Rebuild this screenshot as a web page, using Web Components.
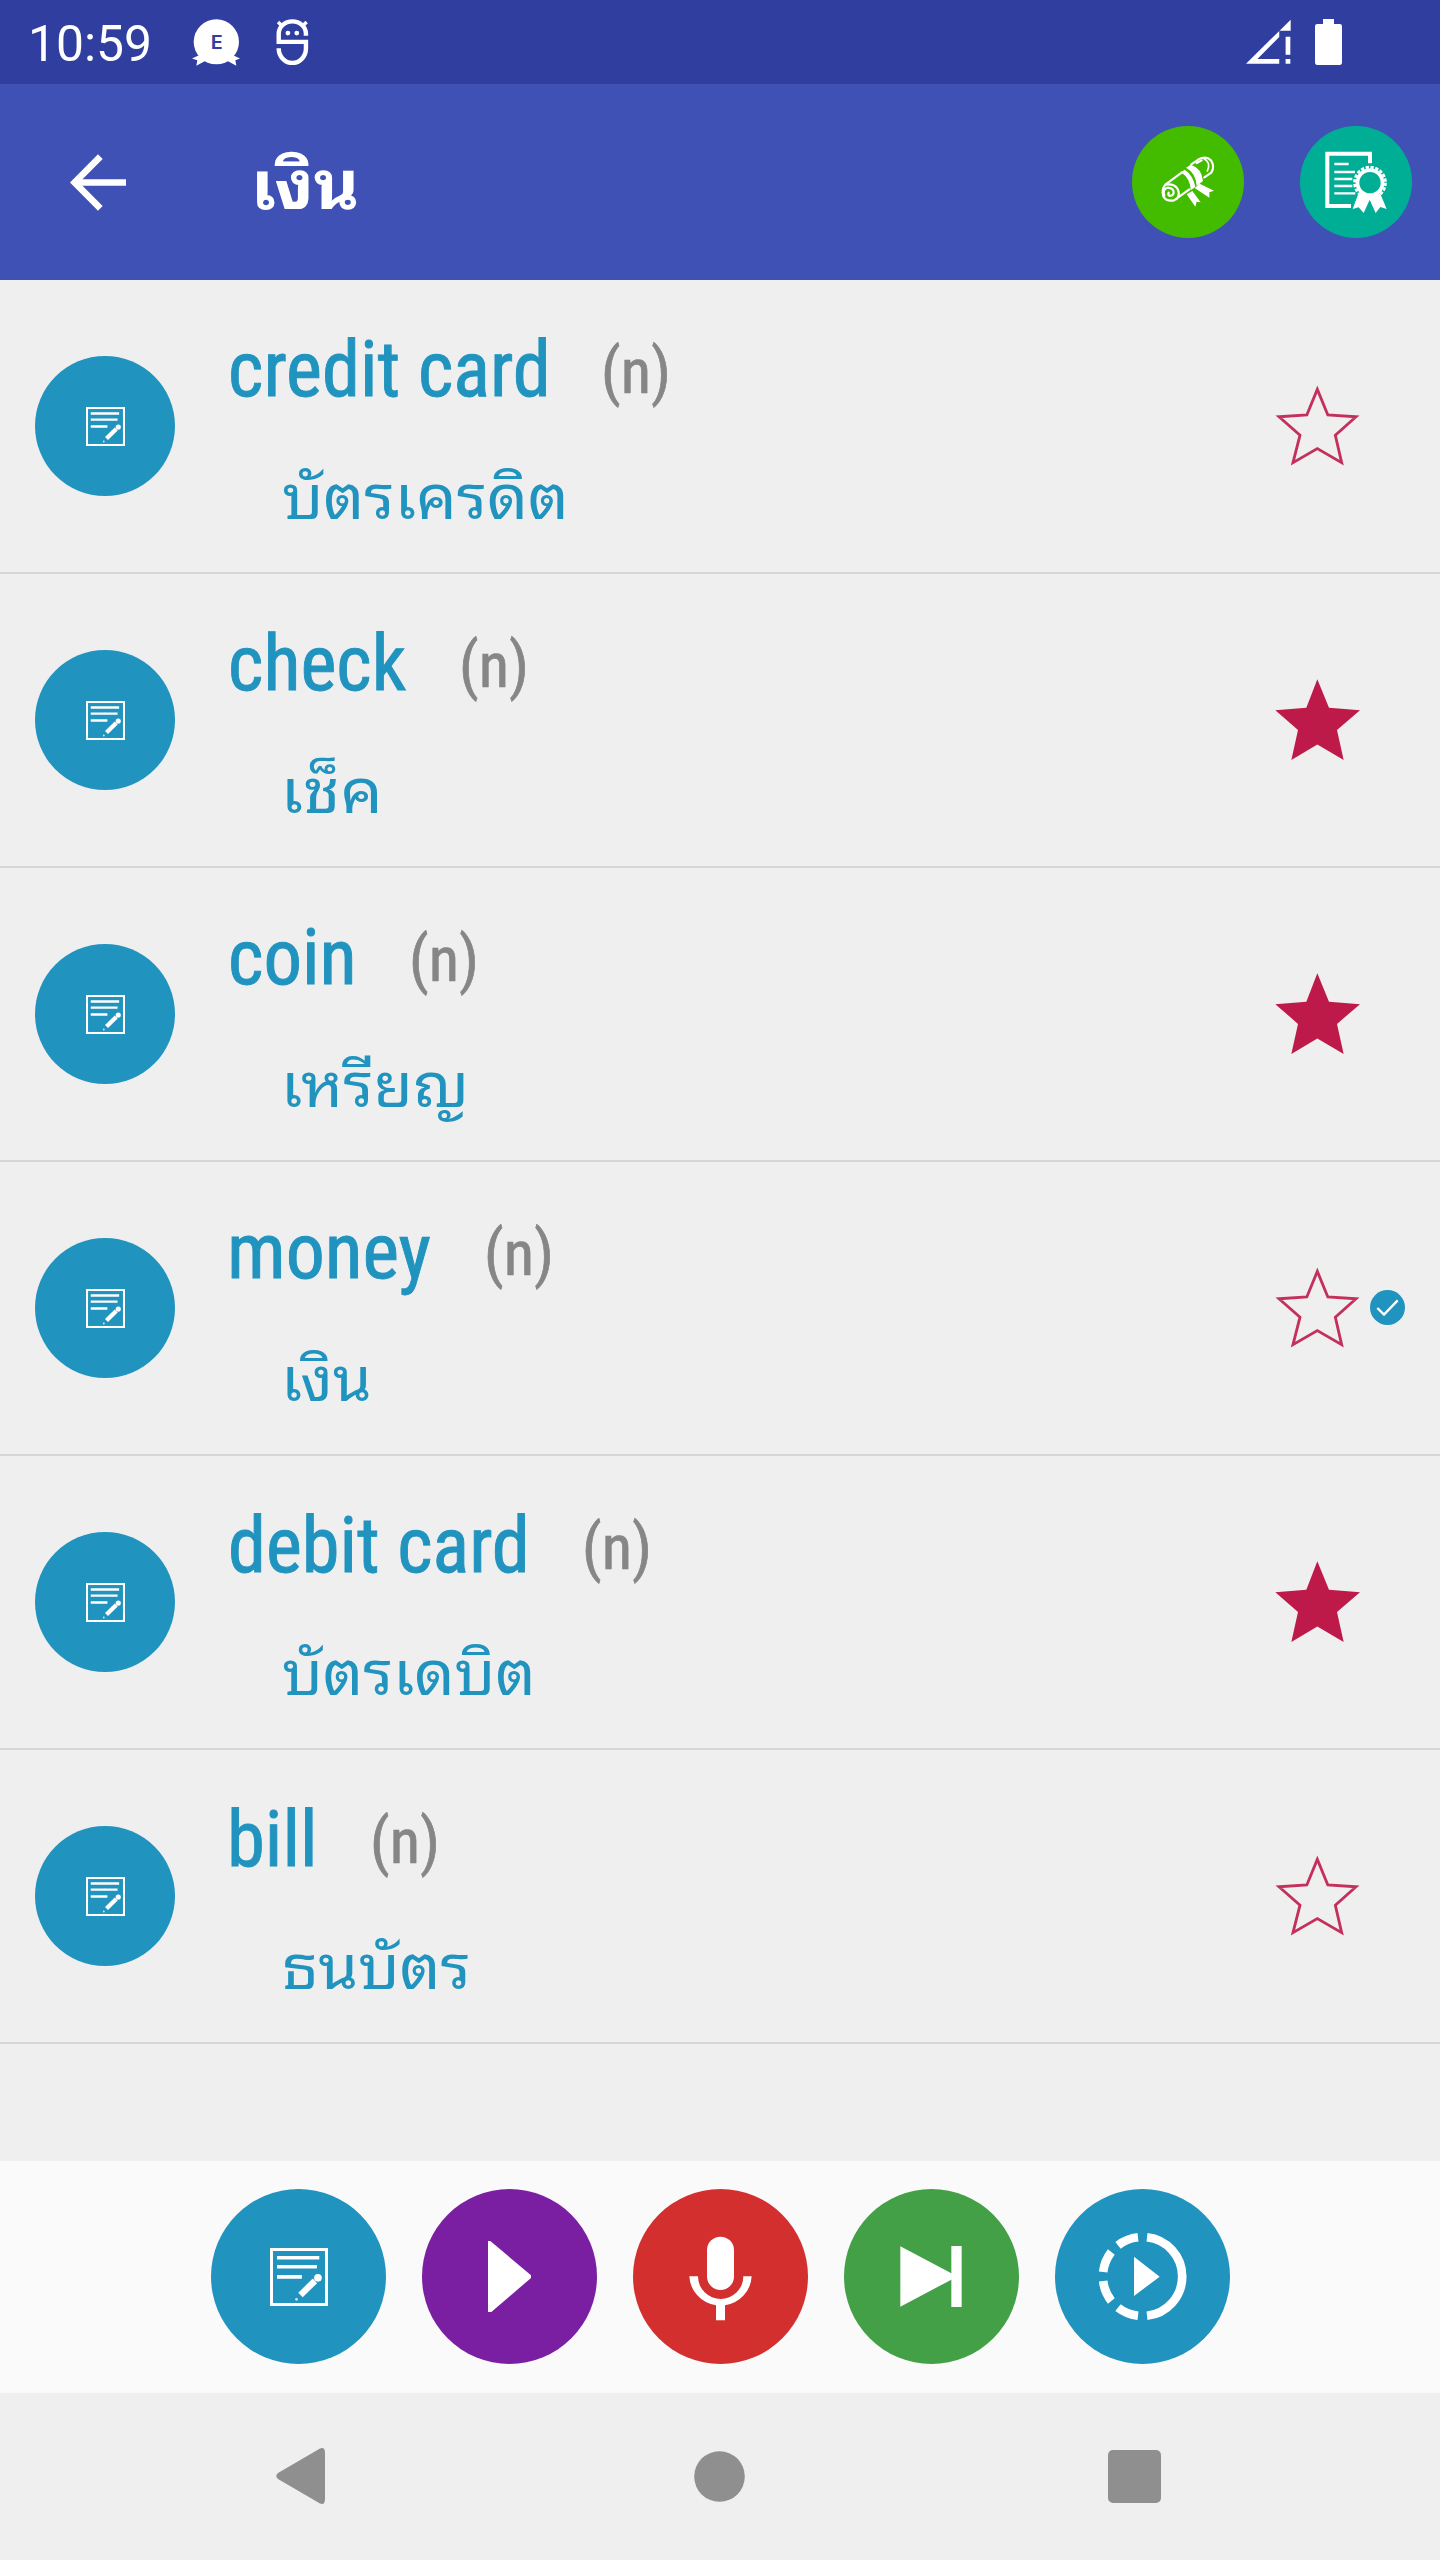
<!DOCTYPE html>
<html lang="th">
<head>
<meta charset="utf-8">
<title>เงิน</title>
<style>
html,body{margin:0;padding:0;background:#efefef}
body{width:1440px;height:2560px;overflow:hidden;font-family:Roboto,"Noto Sans Thai Looped","Noto Sans",sans-serif}
</style>
</head>
<body>
<vocab-app></vocab-app>
<script>
const ICONS = {
  blob: ['574 56 144 142', `<circle cx="647" cy="125" r="68" fill="#fff"/><path fill="#fff" d="M598 164L574 175L590 181L587 197L612 184L628 170ZM694 164L718 175L704 181L707 197L682 184L668 170Z"/><text x="628" y="147" font-family="Open Sans,sans-serif" font-weight="600" font-size="60" fill="#303f9f" textLength="39" lengthAdjust="spacingAndGlyphs">E</text>`],
  bot: ['829 58 97 137', `<g fill="none" stroke="#fff" stroke-width="13"><path d="M917 108V102A39 36 0 0 0 837 102V126H917V146A39 42 0 0 1 837 146V145"/><path stroke-width="10" d="M850 82L835 67M904 82L919 67"/></g><circle cx="864" cy="100" r="7" fill="#fff"/><circle cx="890" cy="100" r="7" fill="#fff"/>`],
  signal: ['437 57 134 135', `<path fill="#fff" d="M437 191L536 93V111L471 177H536V191ZM570 59V92H537ZM555 110H569V164H555ZM555 177H569V191H555Z"/>`],
  battery: ['645 57 81 138', `<path fill="#fff" d="M669 57H702V72H719Q726 72 726 79V187Q726 195 719 195H652Q645 195 645 187V79Q645 72 652 72H669Z"/>`],
  back: ['210 460 168 170', `<path fill="none" stroke="#fff" stroke-width="20" d="M378 545H228M301 468L224 545L301 622"/>`],
  scroll: ['96 377 336 336', `<g fill="none" stroke="#fff" stroke-width="6.500" stroke-linejoin="round" stroke-linecap="round"><path d="M196 553L246 516M274 492L296 477Q318 466 333 480Q345 498 334 517L313 531"/><path d="M290 488L305 480M194 556Q184 570 190 588Q200 605 222 600L268 567M198 553Q222 549 233 566Q241 584 230 596M193 586Q186 566 204 562Q222 564 221 578Q218 588 208 586"/><path d="M208 586Q203 583 206 577"/><path stroke-width="5" d="M312 475Q334 486 322 512"/></g><path fill="#fff" d="M243 516L254 508Q279 524 286 560L272 570Q271 534 243 516ZM258 502L272 493Q305 503 309 542L290 557Q288 518 258 502ZM260 582L277 572L302 606L290 604L286 619ZM284 563L299 550L342 571L328 576L328 592Z"/>`],
  cert: ['600 377 336 336', `<path fill="none" stroke="#fff" stroke-width="12" d="M810 489V460H682V617H753"/><g stroke="#fff" stroke-width="7"><path d="M703 491H746M703 515H765M703 536H757M703 557H757M703 579H766"/></g><path fill="#fff" d="M775 580L758 626L776 621L791 638L809 598L827 638L841 620L860 626L841 580Z"/><circle cx="810" cy="547" r="43" fill="#fff"/><circle cx="810" cy="547" r="46.500" fill="none" stroke="#fff" stroke-width="8" stroke-dasharray="10 4.600"/><circle cx="810" cy="547" r="32" fill="#00ae96"/>`],
  note: ['240 294 173 173', `<rect x="244.500" y="298.500" width="164" height="164" fill="none" stroke="#fff" stroke-width="9"/><path stroke="#fff" stroke-width="11" d="M261 323H387M261 350H380M261 380H335"/><path stroke="#fff" stroke-width="19" d="M331 434L374 392"/><circle cx="383" cy="383" r="11.500" fill="#fff"/><circle cx="319" cy="447" r="4" fill="#fff" opacity=".8"/>`],
  star: ['225 136 255 242', `<path fill="none" stroke="#c4305c" stroke-width="8.500" stroke-miterlimit="10" d="M352 149L383.500 225.500L468 231L406 286L425 368L352 326L279 368L300 286L237 231L320.500 225.500Z"/>`],
  starOn: ['225 136 255 242', `<path fill="#bd1a4a" d="M352 137L387 222L480 229L411 288L431 378L352 332L274 378L294 288L226 229L319 222Z"/>`],
  done: ['390 180 105 105', `<circle cx="442.500" cy="232.500" r="52.500" fill="#2093bf"/><path fill="none" stroke="#fff" stroke-width="7" d="M412 234L432 254L473 211"/>`],
  play: ['696 117 525 525', `<path fill="#fff" d="M894 273H901L1023 376V384L904 486H894Z"/>`],
  mic: ['69 117 525 525', `<rect x="291" y="260" width="81" height="160" rx="40.500" fill="#fff"/><path fill="#fff" d="M238 379H264A67 67 0 0 0 400 379H425A93 93 0 0 1 345 466V511H318V466A93 93 0 0 1 238 379Z"/>`],
  next: ['702 117 525 525', `<path fill="#fff" d="M871 289L1024 370V288H1055V471H1024V389L871 470Z"/>`],
  slow: ['75 117 525 525', `<path fill="#fff" d="M312 320L389 380L312 438Z"/><path fill="none" stroke="#fff" stroke-width="26" d="M351 261.700A118.500 118.500 0 0 1 351 497.300M324 261.700A118.500 118.500 0 0 0 264 286M244 306A118.500 118.500 0 0 0 219.500 366M219.500 393A118.500 118.500 0 0 0 244 453M264 473A118.500 118.500 0 0 0 324 497.300"/>`],
  navBack: ['0 0 49 56', `<path fill="#8f8f8f" d="M44 .5Q49 -1.500 49 5V51Q49 57.500 44 55.500L2 31Q-1.500 28 2 25Z"/>`],
  navHome: ['0 0 51 51', `<circle cx="25.500" cy="25.500" r="25.300" fill="#8f8f8f"/>`],
  navRecent: ['0 0 53 53', `<rect width="53" height="53" rx="5" fill="#8f8f8f"/>`]
};

class AppIcon extends HTMLElement {
  connectedCallback() {
    const [vb, body] = ICONS[this.getAttribute('name')];
    this.attachShadow({mode: 'open'}).innerHTML =
      `<style>:host{display:block;flex:none}svg{display:block;width:100%;height:100%}</style><svg viewBox="${vb}" preserveAspectRatio="none">${body}</svg>`;
  }
}
customElements.define('app-icon', AppIcon);

/* Scales one line of text so that its drawn glyphs span exactly the given width. */
class FitText extends HTMLElement {
  connectedCallback() {
    const w = +this.getAttribute('span');
    const root = this.attachShadow({mode: 'open'});
    root.innerHTML = `<style>:host{display:block;flex:none;white-space:nowrap;width:${w}px}span{display:inline-block;transform-origin:0 50%}</style><span><slot></slot></span>`;
    const cs = getComputedStyle(this);
    const ctx = document.createElement('canvas').getContext('2d');
    ctx.font = `${cs.fontWeight} ${cs.fontSize} ${cs.fontFamily}`;
    const m = ctx.measureText(this.textContent);
    const k = w / (m.actualBoundingBoxLeft + m.actualBoundingBoxRight);
    root.querySelector('span').style.transform = `translateX(${m.actualBoundingBoxLeft * k}px) scaleX(${k})`;
  }
}
customElements.define('fit-text', FitText);

class StatusBar extends HTMLElement {
  connectedCallback() {
    this.attachShadow({mode: 'open'}).innerHTML = `<style>
:host{display:flex;height:84px;box-sizing:border-box;background:#303f9f;padding:19px 98px 0 32px;align-items:flex-start;color:#fff}
fit-text{font-size:50px;line-height:50px;margin-right:43px}
.blob{width:48px;height:47px;margin-right:36px}.bot{width:33px;height:46px}
.signal{width:45px;height:45px;margin-left:auto;margin-right:24px}.bat{width:27px;height:46px}
</style><fit-text span="117">10:59</fit-text><app-icon class="blob" name="blob"></app-icon><app-icon class="bot" name="bot"></app-icon><app-icon class="signal" name="signal"></app-icon><app-icon class="bat" name="battery"></app-icon>`;
  }
}
customElements.define('status-bar', StatusBar);

class RoundButton extends HTMLElement {
  connectedCallback() {
    const s = this.getAttribute('size'), i = this.getAttribute('icon-size') || s;
    this.attachShadow({mode: 'open'}).innerHTML = `<style>
:host{display:flex;flex:none;align-items:center;justify-content:center;width:${s}px;height:${s}px;border-radius:50%;background:${this.getAttribute('tone')}}
app-icon{width:${i}px;height:${i}px}</style><app-icon name="${this.getAttribute('icon')}"></app-icon>`;
  }
}
customElements.define('round-button', RoundButton);

class PageTitle extends HTMLElement {
  connectedCallback() {
    this.attachShadow({mode: 'open'}).innerHTML = `<style>
:host{display:flex;height:196px;box-sizing:border-box;background:#3f51b5;padding:0 28px 0 70px;align-items:center;color:#fff}
.back{width:56px;height:57px;margin-right:131px}
fit-text{font-size:68px;line-height:80px;font-weight:700;padding-top:8px}
.actions{display:flex;gap:56px;margin-left:auto}
</style><app-icon class="back" name="back"></app-icon><fit-text span="100">${this.getAttribute('label')}</fit-text>
<div class="actions"><round-button size="112" tone="#43bc00" icon="scroll"></round-button><round-button size="112" tone="#00ae96" icon="cert"></round-button></div>`;
  }
}
customElements.define('page-title', PageTitle);

class WordRow extends HTMLElement {
  connectedCallback() {
    const a = n => this.getAttribute(n);
    this.attachShadow({mode: 'open'}).innerHTML = `<style>
:host{display:flex;height:294px;box-sizing:border-box;border-bottom:2px solid #d6d6d6;padding:0 35px;align-items:center}
.text{display:flex;flex-direction:column;align-self:stretch;margin-left:55px;padding-top:40px}
.line{display:flex;align-items:flex-start;height:104px;gap:${a('gap')}px;font-family:"Roboto Condensed",Roboto,sans-serif}
.word{font-size:77px;line-height:100px;color:#2093bf;-webkit-text-stroke:.9px #2093bf;margin-left:${a('lead') || 1}px}
.pos{font-size:63px;line-height:103.600px;color:#868686;-webkit-text-stroke:.7px #868686}
.mean{font-size:62px;line-height:80px;color:#2093bf;margin:34px 0 0 ${a('indent')}px}
.star{width:85px;height:81px;margin-left:auto;margin-right:45px;margin-bottom:1px}
.done{width:35px;height:35px;margin-left:-35px;margin-bottom:1px}
</style><round-button size="140" icon-size="39" tone="#2093bf" icon="note"></round-button>
<div class="text"><div class="line"><fit-text class="word" span="${a('ww')}">${a('word')}</fit-text><fit-text class="pos" span="62">(n)</fit-text></div>
<fit-text class="mean" span="${a('mw')}">${a('mean')}</fit-text></div>
<app-icon class="star" name="${this.hasAttribute('fav') ? 'starOn' : 'star'}"></app-icon>${this.hasAttribute('done') ? '<app-icon class="done" name="done"></app-icon>' : ''}`;
  }
}
customElements.define('word-row', WordRow);

class ActionBar extends HTMLElement {
  connectedCallback() {
    this.attachShadow({mode: 'open'}).innerHTML = `<style>
:host{display:flex;gap:36px;height:232px;box-sizing:border-box;background:#fafafa;padding:28px 0 0 211px}
</style><round-button size="175" icon-size="58" tone="#2093bf" icon="note"></round-button>
<round-button size="175" tone="#7b1fa2" icon="play"></round-button>
<round-button size="175" tone="#d32f2f" icon="mic"></round-button>
<round-button size="175" tone="#43a047" icon="next"></round-button>
<round-button size="175" tone="#2093bf" icon="slow"></round-button>`;
  }
}
customElements.define('action-bar', ActionBar);

class NavBar extends HTMLElement {
  connectedCallback() {
    this.attachShadow({mode: 'open'}).innerHTML = `<style>
:host{display:flex;height:167px;box-sizing:border-box;align-items:center;justify-content:space-between;padding:0 279px 1px 276px}
.b{width:49px;height:56px}.h{width:51px;height:51px;margin-right:-6px}.r{width:53px;height:53px}
</style><app-icon class="b" name="navBack"></app-icon><app-icon class="h" name="navHome"></app-icon><app-icon class="r" name="navRecent"></app-icon>`;
  }
}
customElements.define('nav-bar', NavBar);

class VocabApp extends HTMLElement {
  connectedCallback() {
    this.attachShadow({mode: 'open'}).innerHTML = `<style>
:host{display:flex;flex-direction:column;width:1440px;height:2560px;background:#efefef}
main{height:1881px}
</style><status-bar></status-bar><page-title label="เงิน"></page-title><main>
<word-row word="credit card" ww="314.5" gap="59.5" mean="บัตรเครดิต" mw="281" indent="52.5"></word-row>
<word-row word="check" ww="174.5" gap="57" mean="เช็ค" mw="91" indent="56.5" fav></word-row>
<word-row word="coin" ww="121.5" gap="60.5" mean="เหรียญ" mw="176.5" indent="56.5" fav></word-row>
<word-row word="money" ww="198" lead="2" gap="57.5" mean="เงิน" mw="82" indent="56.5" done></word-row>
<word-row word="debit card" ww="293.5" gap="61.5" mean="บัตรเดบิต" mw="248" indent="52.5" fav></word-row>
<word-row word="bill" ww="81" lead="2" gap="60.5" mean="ธนบัตร" mw="183.5" indent="54.5"></word-row>
</main><action-bar></action-bar><nav-bar></nav-bar>`;
  }
}
customElements.define('vocab-app', VocabApp);
</script>
</body>
</html>
